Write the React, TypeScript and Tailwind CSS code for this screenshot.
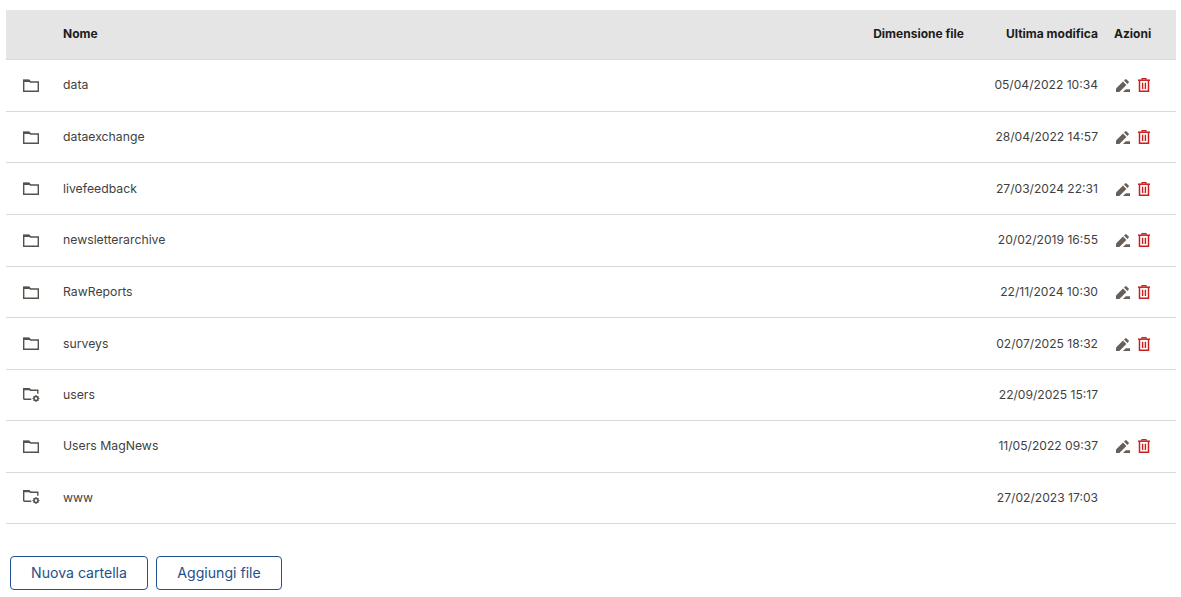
const rows = [
    { name: "data", date: "05/04/2022 10:34", system: false },
    { name: "dataexchange", date: "28/04/2022 14:57", system: false },
    { name: "livefeedback", date: "27/03/2024 22:31", system: false },
    { name: "newsletterarchive", date: "20/02/2019 16:55", system: false },
    { name: "RawReports", date: "22/11/2024 10:30", system: false },
    { name: "surveys", date: "02/07/2025 18:32", system: false },
    { name: "users", date: "22/09/2025 15:17", system: true },
    { name: "Users MagNews", date: "11/05/2022 09:37", system: false },
    { name: "www", date: "27/02/2023 17:03", system: true },
];

function FolderIcon() {
    return (
        <svg width="16" height="13" viewBox="0 0 16 13" fill="none">
            <path d="M0.7 12.3V1.5h5.3l1.5 1.5h7.8v9.3z" stroke="#57514b" strokeWidth="1.4" />
            <path d="M0 0.6h6.2l2 2.4H0z" fill="#57514b" />
        </svg>
    );
}

function SystemFolderIcon() {
    return (
        <svg width="18" height="15" viewBox="0 0 18 15" fill="none">
            <path d="M0.7 11.3V0.7h5.3l1.5 1.5h7.3v3.6M0.7 11.3h7.6" stroke="#57514b" strokeWidth="1.4" />
            <path d="M0 0h6.2l2 2.2H0z" fill="#57514b" />
            <circle cx="13" cy="10.5" r="2" stroke="#57514b" strokeWidth="1.6" />
            <path
                d="M13 7v1.4M13 12.6V14M9.5 10.5h1.4M15.1 10.5h1.4M10.6 8.1l1 1M14.4 11.9l1 1M15.4 8.1l-1 1M11.6 11.9l-1 1"
                stroke="#57514b"
                strokeWidth="1.2"
            />
        </svg>
    );
}

function EditIcon() {
    return (
        <svg width="14" height="13" viewBox="0 0 14 13" className="mt-[1px]">
            <path d="M0 13V9.6L7 2.6 10.4 6l-7 7z" fill="#685f58" />
            <path d="M8 1.6 9.2.4a1 1 0 0 1 1.4 0l2 2a1 1 0 0 1 0 1.4L11.4 5z" fill="#685f58" />
            <path d="M7 13l2.8-2.8H14V13z" fill="#685f58" />
        </svg>
    );
}

function TrashIcon() {
    return (
        <svg width="12" height="14" viewBox="0 0 12 14" fill="none">
            <path d="M0 2.2h12" stroke="#c9201f" strokeWidth="1.5" />
            <path d="M4 2V.6h4V2" stroke="#c9201f" strokeWidth="1.1" />
            <path d="M1.5 2.5v10.7h9V2.5" stroke="#c9201f" strokeWidth="1.5" />
            <path d="M4.6 4.8v6.2M7.4 4.8v6.2" stroke="#c9201f" strokeWidth="1.4" />
        </svg>
    );
}

export default function App() {
    return (
        <div className="h-[597px] overflow-hidden bg-white pt-[10px] pl-[6px] pr-[5px] font-['Inter',sans-serif] text-[12.25px] text-[#3f3f3f]">
            <div className="grid h-[50px] grid-cols-[57px_1fr_110px_134px_78px] items-center border-b border-[#d9d9d9] bg-[#e5e5e5] pb-[1px] text-[12px] font-bold text-[#1c1c1c]">
                <div />
                <div>Nome</div>
                <div className="text-right">Dimensione file</div>
                <div className="text-right">Ultima modifica</div>
                <div className="pl-4">Azioni</div>
            </div>

            {rows.map((row) => (
                <div
                    key={row.name}
                    className={`grid grid-cols-[57px_1fr_110px_134px_78px] items-center border-b border-[#d9d9d9] ${
                        row.system ? "h-[51px]" : "h-[51.7px]"
                    }`}
                >
                    <div className="flex pl-[17px]">
                        {row.system ? <SystemFolderIcon /> : <FolderIcon />}
                    </div>
                    <div>{row.name}</div>
                    <div />
                    <div className="text-right text-[12.1px]">{row.date}</div>
                    <div className="flex items-center gap-[8px] pl-[18px]">
                        {!row.system && (
                            <>
                                <EditIcon />
                                <TrashIcon />
                            </>
                        )}
                    </div>
                </div>
            ))}

            <div className="mt-[32px] ml-[4px] flex gap-2">
                <button className="h-[34px] w-[138px] rounded border border-[#1f5392] text-[14.1px] text-[#1f4f8b]">
                    Nuova cartella
                </button>
                <button className="h-[34px] w-[126px] rounded border border-[#1f5392] text-[14.1px] text-[#1f4f8b]">
                    Aggiungi file
                </button>
            </div>
        </div>
    );
}
